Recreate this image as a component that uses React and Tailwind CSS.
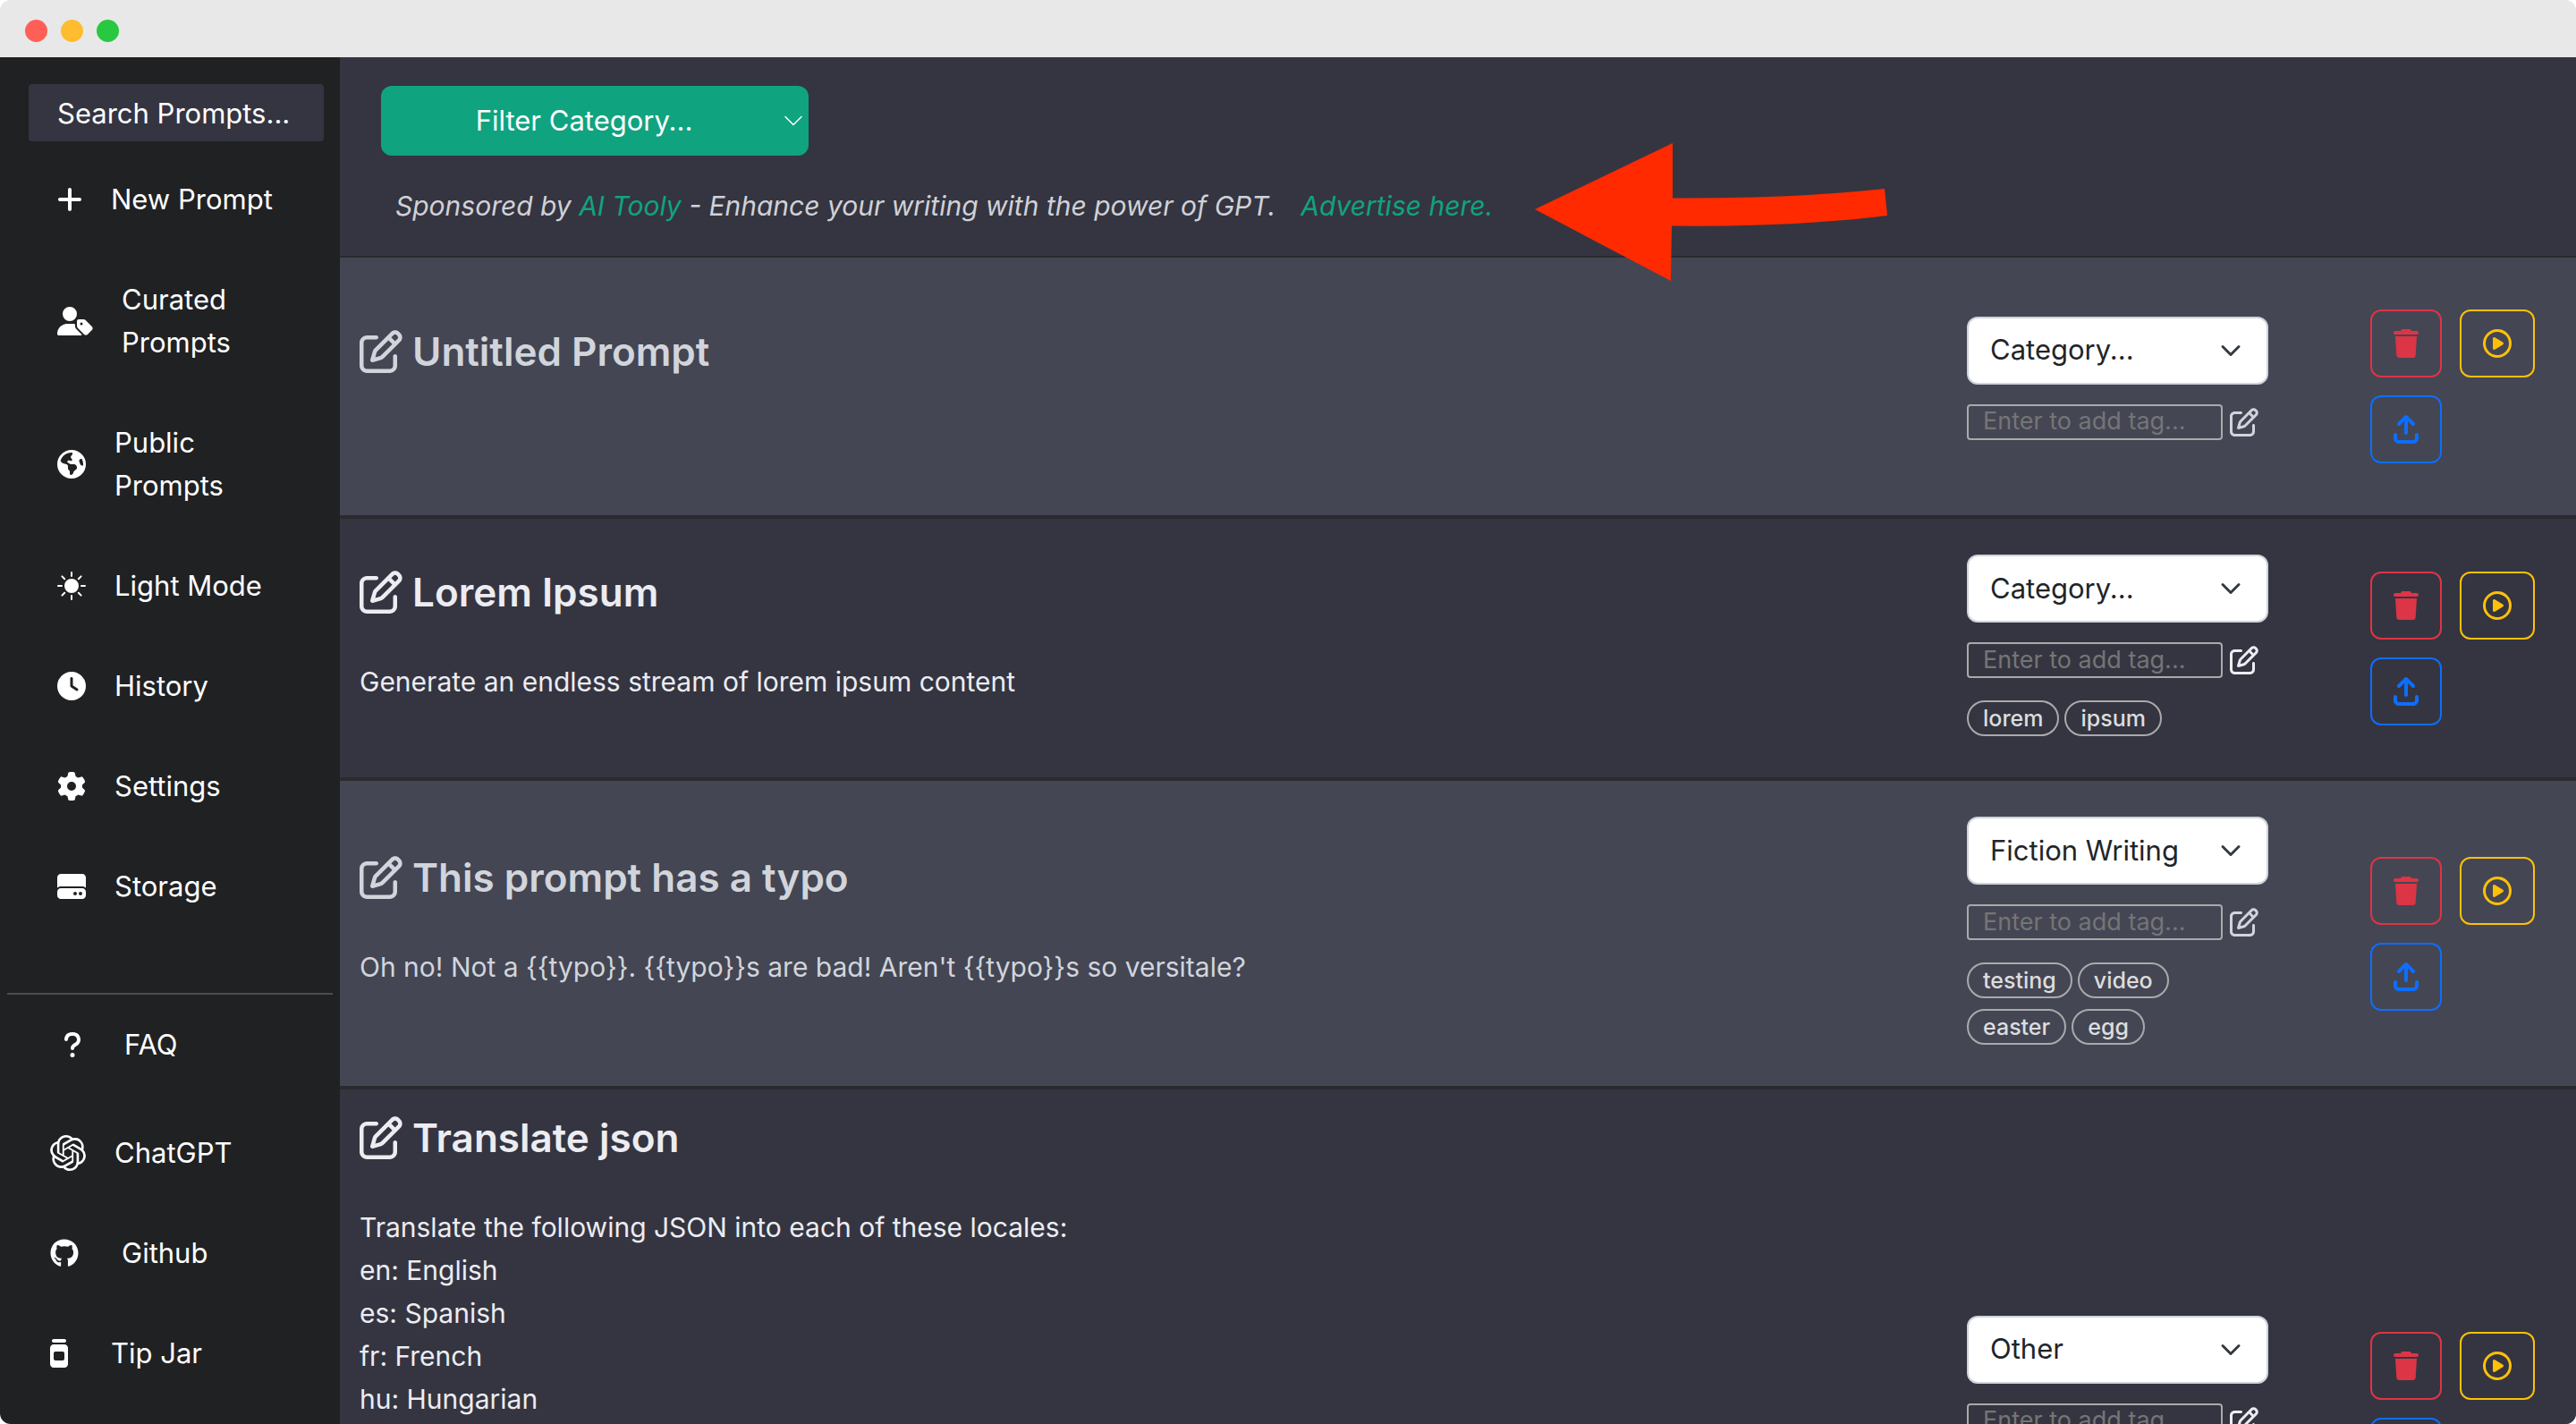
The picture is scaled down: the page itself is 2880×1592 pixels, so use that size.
import {
  FaPlus,
  FaUserTag,
  FaEarthAmericas,
  FaClock,
  FaGear,
  FaHardDrive,
  FaQuestion,
  FaGithub,
  FaJar,
  FaTrash,
  FaRegCirclePlay,
  FaArrowUpFromBracket,
  FaRegPenToSquare,
} from "react-icons/fa6";
import { BsSunFill } from "react-icons/bs";
import { SiOpenai } from "react-icons/si";

const mainLinks = [
  { label: "New Prompt", icon: <FaPlus className="h-8 w-7" /> },
  { label: "Curated Prompts", icon: <FaUserTag className="h-8 w-10" /> },
  { label: "Public Prompts", icon: <FaEarthAmericas className="size-8" /> },
  { label: "Light Mode", icon: <BsSunFill className="size-8" /> },
  { label: "History", icon: <FaClock className="size-8" /> },
  { label: "Settings", icon: <FaGear className="size-8" /> },
  { label: "Storage", icon: <FaHardDrive className="size-8" /> },
];

const prompts = [
  { title: "Untitled Prompt", category: "Category...", lines: [], tags: [] },
  {
    title: "Lorem Ipsum",
    category: "Category...",
    lines: ["Generate an endless stream of lorem ipsum content"],
    tags: ["lorem", "ipsum"],
  },
  {
    title: "This prompt has a typo",
    category: "Fiction Writing",
    lines: ["Oh no! Not a {{typo}}. {{typo}}s are bad! Aren't {{typo}}s so versitale?"],
    tags: ["testing", "video", "easter", "egg"],
  },
  {
    title: "Translate json",
    category: "Other",
    long: true,
    lines: [
      "Translate the following JSON into each of these locales:",
      "en: English",
      "es: Spanish",
      "fr: French",
      "hu: Hungarian",
    ],
    tags: ["json"],
  },
];

const categories = ["Category...", "Fiction Writing", "Other"];

function Chevron({ className, strokeWidth }) {
  return (
    <svg viewBox="0 0 16 16" className={className} fill="none" stroke="currentColor" strokeWidth={strokeWidth} strokeLinecap="round" strokeLinejoin="round" aria-hidden="true">
      <path d="m2 5 6 6 6-6" />
    </svg>
  );
}

function TitleBar() {
  return (
    <div className="flex h-16 shrink-0 items-center gap-[15px] bg-[#e8e8e8] px-7 pt-1">
      <span className="size-[25px] rounded-full bg-[#ff5f57]" />
      <span className="size-[25px] rounded-full bg-[#febc2e]" />
      <span className="size-[25px] rounded-full bg-[#28c840]" />
    </div>
  );
}

function Sidebar() {
  return (
    <aside className="w-[380px] shrink-0 overflow-hidden bg-[#202123] text-[31px] leading-[48px] text-white">
      <div className="pt-[30px] pr-[18px] pb-[9px] pl-8">
        <input
          type="text"
          aria-label="Search prompts"
          placeholder="Search Prompts..."
          className="h-16 w-full rounded bg-[#343541] px-8 text-white placeholder:text-white"
        />
      </div>
      <nav>
        {mainLinks.map(({ label, icon }) => (
          <a key={label} href="#" className="flex items-center gap-8 py-8 pr-16 pl-16">
            <span className="shrink-0">{icon}</span>
            <span>{label}</span>
          </a>
        ))}
      </nav>
      <hr className="mx-2 mt-[63px] border-t-2 border-[#4d4d4f]" />
      <nav>
        <a href="#" className="mb-[9px] flex items-center gap-12 py-8 pl-[71px]">
          <FaQuestion className="h-8 w-5" />
          <span>FAQ</span>
        </a>
        <a href="#" className="flex items-center gap-8 py-8 pl-14">
          <SiOpenai className="size-10" />
          <span>ChatGPT</span>
        </a>
        <a href="#" className="flex items-center gap-12 py-8 pl-14">
          <FaGithub className="size-8" />
          <span>Github</span>
        </a>
        <a href="#" className="flex items-center gap-12 py-8 pl-14">
          <FaJar className="h-8 w-5" />
          <span>Tip Jar</span>
        </a>
      </nav>
    </aside>
  );
}

function Header() {
  return (
    <header className="relative px-[46px] pt-8 pb-8">
      <div className="relative w-[478px]">
        <select
          aria-label="Filter category"
          className="h-[78px] w-full appearance-none rounded-xl bg-[#10a37f] pr-6 text-center text-[31px] text-white"
        >
          <option>Filter Category...</option>
        </select>
        <Chevron className="pointer-events-none absolute top-[27px] right-[5px] size-6 text-white" strokeWidth={1} />
      </div>
      <p className="mt-8 pl-4 text-[30px] leading-[48px] text-[#d1d1d6] italic">
        Sponsored by{" "}
        <a href="#" className="text-[#10a37f]">AI Tooly</a> - Enhance your writing with the power of GPT.
        <a href="#" className="ml-7 text-[#10a37f]">Advertise here.</a>
      </p>
      <svg viewBox="0 0 394 154" className="absolute top-24 left-[1336px] h-[154px] w-[394px]" aria-hidden="true">
        <path d="M0 74 154 0V61.500Q289 62 391 51L394 81Q289 94 153 92.500L152 154Z" fill="#ff2a00" />
      </svg>
    </header>
  );
}

function PromptRow({ prompt, shaded }) {
  return (
    <article
      className={
        shaded
          ? "flex min-h-[292px] items-center border-y-2 border-[#2a2b2f] bg-[#444654] py-[25px] pr-[46px] pl-[22px] text-[#d1d5db]"
          : "flex min-h-[292px] items-center border-y-2 border-[#2a2b2f] bg-[#343541] py-[25px] pr-[46px] pl-[22px] text-[#ececf1]"
      }
    >
      <div className="flex-1">
        <h2 className="flex items-center gap-[11px] text-[44px] leading-[58px] font-semibold">
          <button type="button" aria-label="Edit prompt">
            <FaRegPenToSquare className="size-12" />
          </button>
          {prompt.title}
        </h2>
        <div className={prompt.long ? "min-h-[606px] pt-[47px] pb-[31px] text-[30px] leading-[48px]" : "pt-[47px] pb-[31px] text-[30px] leading-[48px]"}>
          {prompt.lines.map((line) => (
            <p key={line}>{line}</p>
          ))}
        </div>
      </div>

      <div className="w-[337px] py-[15px]">
        <div className="relative">
          <select
            aria-label="Category"
            defaultValue={prompt.category}
            className="h-[76px] w-full appearance-none rounded-xl border-2 border-[#ced4da] bg-white pl-6 text-[31px] text-[#212529]"
          >
            {categories.map((name) => (
              <option key={name}>{name}</option>
            ))}
          </select>
          <Chevron className="pointer-events-none absolute top-[26px] right-[30px] size-6 text-[#343a40]" strokeWidth={2} />
        </div>
        <div className="mt-[22px] mb-[19px] flex items-center gap-2">
          <input
            type="text"
            aria-label="Add tag"
            placeholder="Enter to add tag..."
            className="h-10 w-[286px] rounded border-2 border-[#aaaaaa] bg-transparent px-4 text-[27px] placeholder:text-[#757575]"
          />
          <button type="button" aria-label="Edit tags">
            <FaRegPenToSquare className="size-8" />
          </button>
        </div>
        <div className="flex flex-wrap gap-x-[6px]">
          {prompt.tags.map((tag) => (
            <button
              key={tag}
              type="button"
              className="my-[6px] h-10 rounded-full border-2 border-[#aaaaaa] px-4 text-[25px] leading-9 font-medium text-[#dddddd]"
            >
              {tag}
            </button>
          ))}
        </div>
      </div>

      <div className="ml-[114px] grid grid-cols-[80px_84px] gap-5">
        <button type="button" aria-label="Delete" className="flex h-[76px] items-center justify-center rounded-xl border-2 border-[#dc3545] text-[#dc3545]">
          <FaTrash className="size-8" />
        </button>
        <button type="button" aria-label="Use prompt" className="flex h-[76px] items-center justify-center rounded-xl border-2 border-[#ffc107] text-[#ffc107]">
          <FaRegCirclePlay className="size-8" />
        </button>
        <button type="button" aria-label="Share" className="flex h-[76px] items-center justify-center rounded-xl border-2 border-[#0d6efd] text-[#0d6efd]">
          <FaArrowUpFromBracket className="size-8" />
        </button>
      </div>
    </article>
  );
}

export default function App() {
  return (
    <div className="h-screen bg-white font-['Inter',sans-serif]">
      <div className="flex h-full flex-col overflow-hidden rounded-xl">
        <TitleBar />
        <div className="flex min-h-0 flex-1">
          <Sidebar />
          <main className="min-w-0 flex-1 overflow-hidden bg-[#343541]">
            <Header />
            {prompts.map((prompt, i) => (
              <PromptRow key={prompt.title} prompt={prompt} shaded={i % 2 === 0} />
            ))}
          </main>
        </div>
      </div>
    </div>
  );
}
